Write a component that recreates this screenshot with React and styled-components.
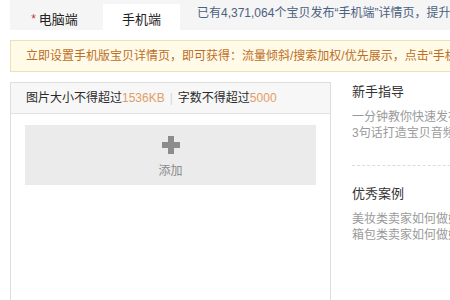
import React from "react";
import styled, { createGlobalStyle } from "styled-components";

const GlobalStyle = createGlobalStyle`
  html, body {
    margin: 0;
    padding: 0;
    background: #fff;
    overflow: hidden;
  }
  body {
    font-family: "Liberation Sans", "Noto Sans CJK SC", sans-serif;
    font-size: 12px;
    color: #333;
  }
`;

const Page = styled.div`
  width: 740px;
  padding-left: 10px;
`;

const TabBar = styled.div`
  display: flex;
  align-items: flex-start;
  height: 30px;
  padding: 4px 0 0 6px;
  box-sizing: border-box;
  background: #f5f5f5;
  white-space: nowrap;
`;

const Tab = styled.div`
  width: 77px;
  height: 26px;
  margin-right: ${(p) => (p.$last ? "0" : "10px")};
  display: flex;
  align-items: center;
  justify-content: center;
  padding-top: 3px;
  box-sizing: border-box;
  font-size: 13px;
  color: #222;
  background: ${(p) => (p.$active ? "#fff" : "transparent")};
`;

const Star = styled.span`
  color: #c0392b;
  margin-right: 3px;
  font-size: 12px;
`;

const Summary = styled.div`
  margin-left: 17px;
  margin-top: -4px;
  line-height: 26px;
  color: #4b6180;
`;

const Notice = styled.div`
  margin-top: 10px;
  height: 32px;
  box-sizing: border-box;
  border: 1px solid #efe2b2;
  background: #fffbe8;
  color: #bd6e1e;
  padding-left: 15px;
  line-height: 30px;
  white-space: nowrap;
`;

const Main = styled.div`
  display: flex;
  margin-top: 10px;
  align-items: flex-start;
`;

const Panel = styled.div`
  width: 321px;
  height: 240px;
  box-sizing: border-box;
  border: 1px solid #dedede;
  border-bottom: none;
`;

const PanelHead = styled.div`
  height: 31px;
  box-sizing: border-box;
  padding-left: 15px;
  line-height: 30px;
  background: #f7f7f7;
  border-bottom: 1px solid #e3e3e3;
  white-space: nowrap;
  color: #2a2a2a;
`;

const Num = styled.span`
  color: #e39c66;
`;

const Sep = styled.span`
  color: #d6d6d6;
  margin: 0 5px;
`;

const PanelBody = styled.div`
  padding: 11px 14px 0 14px;
`;

const AddBox = styled.div`
  height: 60px;
  background: #ebebeb;
  display: flex;
  flex-direction: column;
  align-items: center;
  padding-top: 11px;
  box-sizing: border-box;
  color: #8a8a8a;
  cursor: pointer;
`;

const AddText = styled.div`
  margin-top: 9px;
  line-height: 16px;
`;

const Sidebar = styled.div`
  margin-left: 21px;
  width: 220px;
  white-space: nowrap;
`;

const Section = styled.div`
  padding-bottom: ${(p) => (p.$first ? "24px" : "0")};
  border-bottom: ${(p) => (p.$first ? "1px dashed #dcdcdc" : "none")};
  margin-bottom: ${(p) => (p.$first ? "18px" : "0")};
`;

const Heading = styled.div`
  font-size: 13px;
  line-height: 20px;
  color: #333;
  margin-bottom: 7px;
`;

const Link = styled.div`
  line-height: 16px;
  color: #9a9a9a;
`;

const PlusIcon = () => (
  <svg width="18" height="18" viewBox="0 0 18 18">
    <rect x="6" y="0" width="6" height="18" fill="#8c8c8c" />
    <rect x="0" y="6" width="18" height="6" fill="#8c8c8c" />
  </svg>
);

export default function App() {
  return (
    <>
      <GlobalStyle />
      <Page>
        <TabBar>
          <Tab>
            <Star>*</Star>电脑端
          </Tab>
          <Tab $active $last>
            手机端
          </Tab>
          <Summary>已有4,371,064个宝贝发布“手机端”详情页，提升宝贝转化率！</Summary>
        </TabBar>

        <Notice>
          立即设置手机版宝贝详情页，即可获得：流量倾斜/搜索加权/优先展示，点击“手机版详情页”开始编辑
        </Notice>

        <Main>
          <Panel>
            <PanelHead>
              图片大小不得超过<Num>1536KB</Num>
              <Sep>|</Sep>
              字数不得超过<Num>5000</Num>
            </PanelHead>
            <PanelBody>
              <AddBox>
                <PlusIcon />
                <AddText>添加</AddText>
              </AddBox>
            </PanelBody>
          </Panel>

          <Sidebar>
            <Section $first>
              <Heading>新手指导</Heading>
              <Link>一分钟教你快速发布手机详情</Link>
              <Link>3句话打造宝贝音频介绍</Link>
            </Section>
            <Section>
              <Heading>优秀案例</Heading>
              <Link>美妆类卖家如何做好手机详情</Link>
              <Link>箱包类卖家如何做好手机详情</Link>
            </Section>
          </Sidebar>
        </Main>
      </Page>
    </>
  );
}
